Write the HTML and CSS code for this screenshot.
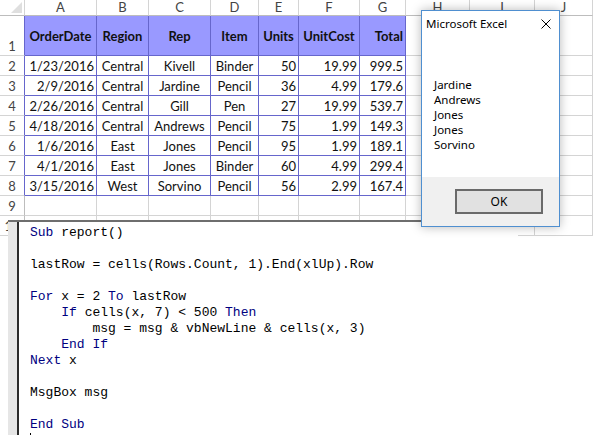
FILE: index.html
```html
<!DOCTYPE html>
<html>
<head>
<meta charset="utf-8">
<link rel="stylesheet" href="styles.css">
</head>
<body>
<div class="sheet">
  <div class="corner"><span class="tri"></span></div>
  <div class="ch">A</div><div class="ch">B</div><div class="ch">C</div><div class="ch">D</div><div class="ch">E</div><div class="ch">F</div><div class="ch">G</div><div class="ch">H</div><div class="ch">I</div><div class="ch">J</div>

  <div class="rh rh1 rt">1</div>
  <div class="c t hd">OrderDate</div><div class="c t hd">Region</div><div class="c t hd">Rep</div><div class="c t hd">Item</div><div class="c t hd">Units</div><div class="c t hd">UnitCost</div><div class="c t hd r">Total</div>
  <div class="c"></div><div class="c"></div><div class="c"></div>

  <div class="rh rt">2</div>
  <div class="c t r">1/23/2016</div><div class="c t m">Central</div><div class="c t m">Kivell</div><div class="c t m">Binder</div><div class="c t r">50</div><div class="c t r">19.99</div><div class="c t r">999.5</div>
  <div class="c"></div><div class="c"></div><div class="c"></div>

  <div class="rh rt">3</div>
  <div class="c t r">2/9/2016</div><div class="c t m">Central</div><div class="c t m">Jardine</div><div class="c t m">Pencil</div><div class="c t r">36</div><div class="c t r">4.99</div><div class="c t r">179.6</div>
  <div class="c"></div><div class="c"></div><div class="c"></div>

  <div class="rh rt">4</div>
  <div class="c t r">2/26/2016</div><div class="c t m">Central</div><div class="c t m">Gill</div><div class="c t m">Pen</div><div class="c t r">27</div><div class="c t r">19.99</div><div class="c t r">539.7</div>
  <div class="c"></div><div class="c"></div><div class="c"></div>

  <div class="rh rt">5</div>
  <div class="c t r">4/18/2016</div><div class="c t m">Central</div><div class="c t m">Andrews</div><div class="c t m">Pencil</div><div class="c t r">75</div><div class="c t r">1.99</div><div class="c t r">149.3</div>
  <div class="c"></div><div class="c"></div><div class="c"></div>

  <div class="rh rt">6</div>
  <div class="c t r">1/6/2016</div><div class="c t m">East</div><div class="c t m">Jones</div><div class="c t m">Pencil</div><div class="c t r">95</div><div class="c t r">1.99</div><div class="c t r">189.1</div>
  <div class="c"></div><div class="c"></div><div class="c"></div>

  <div class="rh rt">7</div>
  <div class="c t r">4/1/2016</div><div class="c t m">East</div><div class="c t m">Jones</div><div class="c t m">Binder</div><div class="c t r">60</div><div class="c t r">4.99</div><div class="c t r">299.4</div>
  <div class="c"></div><div class="c"></div><div class="c"></div>

  <div class="rh rt">8</div>
  <div class="c t r">3/15/2016</div><div class="c t m">West</div><div class="c t m">Sorvino</div><div class="c t m">Pencil</div><div class="c t r">56</div><div class="c t r">2.99</div><div class="c t r">167.4</div>
  <div class="c"></div><div class="c"></div><div class="c"></div>

  <div class="rh">9</div>
  <div class="c"></div><div class="c"></div><div class="c"></div><div class="c"></div><div class="c"></div><div class="c"></div><div class="c"></div><div class="c"></div><div class="c"></div><div class="c"></div>

  <div class="rh">10</div>
  <div class="c"></div><div class="c"></div><div class="c"></div><div class="c"></div><div class="c"></div><div class="c"></div><div class="c"></div><div class="c"></div><div class="c"></div><div class="c"></div>
</div>

<div class="codewin">
  <div class="margin"></div>
<pre class="code"><span class="kw">Sub</span> report()

lastRow = cells(Rows.Count, 1).End(xlUp).Row

<span class="kw">For</span> x = 2 <span class="kw">To</span> lastRow
    <span class="kw">If</span> cells(x, 7) &lt; 500 <span class="kw">Then</span>
        msg = msg &amp; vbNewLine &amp; cells(x, 3)
    <span class="kw">End If</span>
<span class="kw">Next</span> x

MsgBox msg

<span class="kw">End Sub</span>
<span class="caret"></span></pre>
</div>

<div class="dialog">
  <div class="titlebar">
    <span class="title">Microsoft Excel</span>
    <svg class="close" width="10" height="10" viewBox="0 0 10 10"><path d="M0.5 0.5 L9.5 9.5 M9.5 0.5 L0.5 9.5" stroke="#000" stroke-width="1" fill="none"/></svg>
  </div>
  <div class="dbody">
    <div>Jardine</div>
    <div>Andrews</div>
    <div>Jones</div>
    <div>Jones</div>
    <div>Sorvino</div>
  </div>
  <div class="dfoot">
    <div class="btn">OK</div>
  </div>
</div>
</body>
</html>
```
FILE: styles.css
```css
* { box-sizing: border-box; }
html, body { margin: 0; padding: 0; background: #fff; }
body {
  width: 593px;
  height: 435px;
  overflow: hidden;
  position: relative;
  font-family: Lato, "Open Sans", sans-serif;
  font-size: 13px;
  color: #000;
}

.sheet {
  display: grid;
  grid-template-columns: 25px 72px 52px 62px 48px 40px 61px 46px 64px 65px 58px;
  grid-template-rows: 16px 40px repeat(9, 20px);
}

.corner {
  position: relative;
  border-right: 1px solid #d4d4d4;
  border-bottom: 1px solid #bdbdbd;
}
.tri {
  position: absolute;
  right: 2px;
  bottom: 2px;
  width: 0;
  height: 0;
  border-left: 11px solid transparent;
  border-bottom: 11px solid #dfdfdf;
}

.ch {
  display: flex;
  align-items: center;
  justify-content: center;
  color: #444;
  font-size: 13px;
  line-height: 1;
  border-right: 1px solid #d4d4d4;
  border-bottom: 1px solid #bdbdbd;
}

.rh {
  display: flex;
  align-items: center;
  justify-content: center;
  color: #444;
  font-size: 13px;
  border-right: 1px solid #bdbdbd;
  border-bottom: 1px solid #d4d4d4;
}
.rh1 { align-items: flex-end; padding-bottom: 1px; }
.rh.rt { border-right-color: #6666cc; }

.c {
  display: flex;
  align-items: center;
  padding: 0 2px;
  white-space: nowrap;
  overflow: hidden;
  border-right: 1px solid #d4d4d4;
  border-bottom: 1px solid #d4d4d4;
  color: #111;
}
.c.t { border-right-color: #6666cc; border-bottom-color: #6666cc; }
.c.hd {
  background: #9999ff;
  font-weight: bold;
  justify-content: center;
  color: #111;
}
.c.r { justify-content: flex-end; }
.c.m { justify-content: center; }

.codewin {
  position: absolute;
  left: 8px;
  top: 220px;
  width: 510px;
  height: 215px;
  background: #fff;
  border-top: 2px solid #6e6e6e;
  display: flex;
}
.margin {
  width: 11px;
  flex: none;
  background: #e6e6e6;
  border-right: 2px solid #2b2b2b;
}
.code {
  margin: 0;
  padding: 3px 0 0 11px;
  font-family: "Liberation Mono", "Courier New", monospace;
  font-size: 13px;
  line-height: 16px;
  color: #000;
}
.kw { color: #00007f; }
.caret {
  display: inline-block;
  width: 1px;
  height: 14px;
  background: #000;
  vertical-align: top;
}

.dialog {
  position: absolute;
  left: 421px;
  top: 10px;
  width: 139px;
  height: 217px;
  background: #fff;
  border: 1px solid #4f8fd0;
  box-shadow: 0 0 10px rgba(0,0,0,0.28);
  font-family: "Noto Sans", "Open Sans", sans-serif;
  font-size: 11.5px;
  display: flex;
  flex-direction: column;
}
.titlebar {
  height: 25px;
  flex: none;
  display: flex;
  align-items: center;
  justify-content: space-between;
  padding: 0 8px 0 4px;
}
.title { color: #000; }
.close { display: block; }
.dbody {
  flex: 1;
  padding: 41px 0 0 12px;
  line-height: 15px;
}
.dfoot {
  height: 49px;
  flex: none;
  background: #f0f0f0;
  display: flex;
  justify-content: flex-end;
  align-items: flex-start;
  padding: 12px 16px 0 0;
}
.btn {
  width: 88px;
  height: 25px;
  background: #e1e1e1;
  border: 2px solid #6a6a6a;
  display: flex;
  align-items: center;
  justify-content: center;
  font-size: 12px;
}
```
